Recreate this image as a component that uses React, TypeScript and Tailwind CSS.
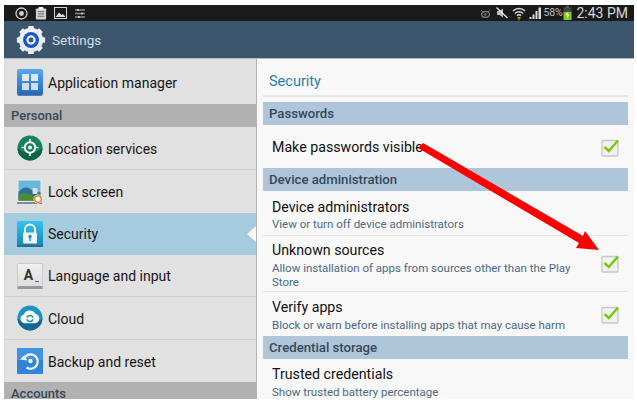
const font = 'font-["Roboto",sans-serif]'

function GearIcon() {
  const teeth = [0, 45, 90, 135, 180, 225, 270, 315]
  return (
    <svg width="30" height="30" viewBox="0 0 32 32">
      <defs>
        <radialGradient id="gearfill" cx="50%" cy="40%" r="60%">
          <stop offset="0%" stopColor="#ffffff" />
          <stop offset="100%" stopColor="#dfe4ea" />
        </radialGradient>
      </defs>
      {teeth.map((a) => (
        <rect key={a} x="13" y="1" width="6" height="6" rx="1" fill="#f2f4f6" transform={`rotate(${a} 16 16)`} />
      ))}
      <circle cx="16" cy="16" r="13" fill="url(#gearfill)" />
      <circle cx="16" cy="16" r="8.500" fill="#1a55cc" />
      <circle cx="16" cy="16" r="5" fill="#e6eef8" />
      <circle cx="16" cy="16" r="2.600" fill="#3d5a73" />
    </svg>
  )
}

function StatusLeft() {
  return (
    <div className="flex items-center gap-[7px] pl-[11px]">
      <svg width="13" height="13" viewBox="0 0 13 13">
        <circle cx="6.5" cy="6.5" r="5.5" fill="none" stroke="#cfcfcf" strokeWidth="1.3" />
        <circle cx="6.5" cy="6.5" r="2.4" fill="#cfcfcf" />
      </svg>
      <svg width="12" height="13" viewBox="0 0 12 14">
        <rect x="0.5" y="1.5" width="11" height="12" rx="1" fill="#d2d2d2" />
        <rect x="3.5" y="0" width="5" height="3" fill="#f0f0f0" />
        <path d="M2.5 5h7M2.5 7.5h7M2.5 10h7" stroke="#666" strokeWidth="1" />
      </svg>
      <svg width="13" height="12" viewBox="0 0 13 12">
        <rect x="0.5" y="0.5" width="12" height="11" fill="#1a1a1a" stroke="#d2d2d2" />
        <path d="M1.5 10 L5 5.5 L7.5 8 L9 7 L11.5 10 Z" fill="#e0e0e0" />
      </svg>
      <svg width="11" height="11" viewBox="0 0 11 11" className="ml-[1px]">
        <path d="M0 2h10M0 5.500h10M0 9h10" stroke="#8b8b8b" strokeWidth="1.500" />
        <path d="M3 1v2M7 4.500v2M4 8v2" stroke="#d0d0d0" strokeWidth="1.500" />
      </svg>
    </div>
  )
}

function StatusRight() {
  return (
    <div className="flex items-center pr-[6px]">
      <svg width="11" height="9" viewBox="0 0 11 9" className="mr-[5px]">
        <ellipse cx="5.500" cy="5.500" rx="4" ry="3" fill="none" stroke="#777" strokeWidth="1.300" />
        <circle cx="5.500" cy="5.500" r="1.200" fill="#777" />
        <path d="M1 1 L3 3 M10 1 L8 3" stroke="#777" />
      </svg>
      <svg width="12" height="12" viewBox="0 0 12 12" className="mr-[4px]">
        <path d="M1 4h2.500L7 1.500v9L3.500 8H1z" fill="#bdbdbd" />
        <path d="M0.500 0.500 L11.500 11" stroke="#e8e8e8" strokeWidth="1.300" />
      </svg>
      <svg width="14" height="15" viewBox="0 0 14 15" className="mr-[3px]">
        <path d="M1 5 A8.500 8.500 0 0 1 13 5" fill="none" stroke="#d5d5d5" strokeWidth="1.500" />
        <path d="M3 7.500 A5.500 5.500 0 0 1 11 7.500" fill="none" stroke="#d5d5d5" strokeWidth="1.500" />
        <path d="M5 9.800 A2.600 2.600 0 0 1 9 9.800" fill="none" stroke="#d5d5d5" strokeWidth="1.500" />
        <path d="M5.500 11h3v1.500h-3z" fill="#9bbf3a" />
        <path d="M6 12.500h2l-1 2.500z" fill="#c47a2a" />
      </svg>
      <svg width="13" height="12" viewBox="0 0 12 12" className="mr-[2px]">
        <path d="M0 12h2V10H0zM3 12h2V7.500H3zM6 12h2V4H6zM9 12h2.500V0.500H9z" fill="#d8d8d8" />
      </svg>
      <span className="text-[10.500px] leading-none text-[#bdbdbd] tracking-[-0.2px]">58%</span>
      <svg width="9" height="14" viewBox="0 0 9 14" className="ml-[1px]">
        <rect x="3" y="0" width="3" height="2" fill="#666" />
        <rect x="0.500" y="1.500" width="8" height="5" fill="#444" />
        <rect x="0.500" y="6" width="8" height="8" fill="#86c71f" />
        <path d="M5.500 5 L2.500 9 H4.500 L3.500 13 L6.500 8.500 H4.500 Z" fill="#f0f5e0" />
      </svg>
      <span className="ml-[4px] text-[14px] leading-none text-[#d6d6d6]">2:43 PM</span>
    </div>
  )
}

function AppIcon() {
  return (
    <div className="w-[26px] h-[26px] rounded-[2px] bg-gradient-to-b from-[#58a7ea] to-[#2268be] grid grid-cols-2 gap-[1.500px] p-[5px] shadow-[0_1px_0_#6e7f8c]">
      <div className="bg-[#e0e8ef]" />
      <div className="bg-[#e0e8ef]" />
      <div className="bg-[#d3dde6]" />
      <div className="bg-[#d3dde6]" />
    </div>
  )
}

function LocationIcon() {
  return (
    <svg width="26" height="26" viewBox="0 0 26 26">
      <circle cx="13" cy="13" r="12.500" fill="#15815e" />
      <path d="M0.500 13 A12.500 12.500 0 0 0 25.500 13 A14 9 0 0 1 0.500 13" fill="#0d6347" />
      <circle cx="13" cy="12.500" r="5.200" fill="none" stroke="#f2f7f4" strokeWidth="2" />
      <circle cx="13" cy="12.500" r="2" fill="#f2f7f4" />
      <path d="M13 4v3.500M13 17.500V21M4.500 12.500H8M18 12.500h3.500" stroke="#f2f7f4" strokeWidth="1.600" />
    </svg>
  )
}

function LockScreenIcon() {
  return (
    <svg width="26" height="26" viewBox="0 0 26 26">
      <rect x="0" y="0" width="25" height="25" fill="#e8e8e8" />
      <rect x="1.500" y="1.500" width="22" height="20" fill="#6cb6d8" />
      <path d="M1.500 13 Q8 6 13 10 T23.500 13 V21.500 H1.500Z" fill="#2f6f9a" />
      <path d="M1.500 16 Q10 12 17 17 L19 21.500 H1.500Z" fill="#4d8a34" />
      <rect x="0" y="23" width="25" height="2" fill="#8a8a8a" />
      <rect x="15.500" y="9" width="5" height="6" rx="1" fill="#d8dfe4" />
      <circle cx="21" cy="20" r="4.500" fill="#ffffff" />
      <circle cx="21" cy="20" r="3.300" fill="none" stroke="#e58a1f" strokeWidth="1.500" />
    </svg>
  )
}

function SecurityIcon() {
  return (
    <svg width="26" height="26" viewBox="0 0 26 26">
      <defs>
        <linearGradient id="secfill" x1="0" y1="0" x2="0" y2="1">
          <stop offset="0%" stopColor="#37c3ee" />
          <stop offset="100%" stopColor="#0f87c0" />
        </linearGradient>
      </defs>
      <rect x="0" y="0" width="26" height="25" rx="1.500" fill="url(#secfill)" />
      <rect x="0" y="24" width="26" height="2" fill="#2b6d8d" />
      <path d="M8 12V8.500a5 5 0 0 1 10 0V12" fill="none" stroke="#f5f8fa" strokeWidth="2" />
      <rect x="6" y="11.500" width="14" height="11" rx="1" fill="#f5f8fa" />
      <circle cx="13" cy="15.500" r="1.700" fill="#1c8fc5" />
      <rect x="12.300" y="16" width="1.400" height="4" fill="#1c8fc5" />
    </svg>
  )
}

function LanguageIcon() {
  return (
    <div className="relative w-[26px] h-[26px] rounded-[1px] bg-gradient-to-b from-[#f1f1f1] to-[#dddddd] border border-[#cbcbcb] border-b-[3px] border-b-[#999] flex items-center justify-center">
      <span className="text-[14px] font-bold leading-none text-[#333] pr-[3px]">A</span>
      <div className="absolute right-[3px] bottom-[4px] w-[4px] h-[1px] bg-[#666]" />
    </div>
  )
}

function CloudIcon() {
  return (
    <svg width="26" height="26" viewBox="0 0 26 26">
      <circle cx="13" cy="13" r="12.500" fill="#1c93c4" />
      <path d="M0.500 13 A12.500 12.500 0 0 0 25.500 13 A14 9 0 0 1 0.500 13" fill="#12688f" />
      <path d="M7.500 18.200 A4.500 4.500 0 0 1 6.800 9.400 A6.500 6.500 0 0 1 18.500 9 A4.700 4.700 0 0 1 18.500 18.200 Z" fill="#f5f9fb" />
      <circle cx="13" cy="13.500" r="3" fill="none" stroke="#1c93c4" strokeWidth="1.300" />
      <path d="M8.500 13.500h3M14.500 13.500h3" stroke="#f5f9fb" strokeWidth="1.500" />
    </svg>
  )
}

function BackupIcon() {
  return (
    <svg width="26" height="26" viewBox="0 0 26 26">
      <rect x="0" y="0" width="26" height="26" rx="1" fill="#2f84d8" />
      <rect x="0" y="0" width="26" height="12" fill="#3f93e2" />
      <path d="M6.800 11 A7.200 7.200 0 1 1 9.500 19.500" fill="none" stroke="#f4f7fa" strokeWidth="2.200" />
      <path d="M3 11.500 L7 7.500 L10.500 12.500 Z" fill="#f4f7fa" />
      <circle cx="13.500" cy="13" r="2.200" fill="#f4f7fa" />
    </svg>
  )
}

function SideRow({ icon, label, height, active, border = true, textPad = 'pt-[1px]' }: { icon: React.ReactNode; label: string; height: string; active?: boolean; border?: boolean; textPad?: string }) {
  return (
    <div className={`flex items-center pl-[13px] ${height} ${active ? 'bg-[#a7cbde]' : 'bg-[#e1e1e1]'} ${border ? 'border-b border-[#cfcfcf]' : ''}`}>
      <div className="w-[26px] h-[26px] shrink-0">{icon}</div>
      <span className={`block ml-[5px] ${textPad} text-[14px] leading-none text-[#161616]`}>{label}</span>
    </div>
  )
}

function SideHeader({ label, height }: { label: string; height: string }) {
  return (
    <div className={`${height} bg-[#b1b1b1] pl-[7px] flex items-center`}>
      <span className="block text-[13px] font-medium leading-none text-[#34495a]">{label}</span>
    </div>
  )
}

function Checkbox() {
  return (
    <svg width="19" height="19" viewBox="0 0 19 19">
      <rect x="1" y="2.500" width="16" height="15.500" rx="1" fill="#f1f1f1" stroke="#c6c6c6" strokeWidth="1.300" />
      <path d="M3.500 9 L7.800 13 L17 2.500" fill="none" stroke="#7dc80f" strokeWidth="2.600" />
    </svg>
  )
}

function SectionHeader({ label }: { label: string }) {
  return (
    <div className="h-[23px] bg-[#afc6da] pl-[6px] flex items-center">
      <span className="text-[13.200px] font-medium leading-none text-[#34495a]">{label}</span>
    </div>
  )
}

function PrefRow({ title, sub, height, checkTop, titleOffset, border = true }: { title: string; sub?: string; height: string; checkTop?: string; titleOffset: string; border?: boolean }) {
  return (
    <div className={`relative pl-[9px] ${height} ${border ? 'border-b border-[#e2e2e2]' : ''} ${titleOffset}`}>
      <div className="text-[14.200px] leading-[17px] text-[#111]">{title}</div>
      {sub && <div className="text-[11.500px] leading-[14px] mt-[1.500px] text-[#4d6a85] w-[312px]">{sub}</div>}
      {checkTop && (
        <div className={`absolute right-[8px] ${checkTop}`}>
          <Checkbox />
        </div>
      )}
    </div>
  )
}

export default function App() {
  return (
    <div className={`w-[637px] h-[404px] bg-white pt-[5px] pl-[4px] overflow-hidden ${font}`}>
      <div className="relative w-[630px] h-[394px] overflow-hidden flex flex-col">
        <div className="h-[16px] bg-[#1a1a1a] flex items-center justify-between shrink-0">
          <StatusLeft />
          <StatusRight />
        </div>
        <div className="h-[37px] bg-[#3c566d] flex items-center pl-[12px] shrink-0">
          <GearIcon />
          <span className="block ml-[6px] pt-[2px] text-[13.500px] leading-none text-[#d5dde4]">Settings</span>
        </div>
        <div className="flex flex-1 min-h-0 border-t border-[#b9b9b9] bg-[#dcdcdc]">
          <div className="w-[252px] shrink-0 pt-[1px] bg-[#e1e1e1]">
            <SideRow icon={<AppIcon />} label="Application manager" height="h-[44px]" border={false} />
            <SideHeader label="Personal" height="h-[23px]" />
            <SideRow icon={<LocationIcon />} label="Location services" height="h-[43px]" />
            <SideRow icon={<LockScreenIcon />} label="Lock screen" height="h-[43px]" border={false} />
            <div className="relative">
              <SideRow icon={<SecurityIcon />} label="Security" height="h-[42px]" active border={false} textPad="pt-0" />
              <div className="absolute right-0 top-[13px] w-0 h-0 border-y-[8px] border-y-transparent border-r-[9px] border-r-[#f8f8f8]" />
            </div>
            <SideRow icon={<LanguageIcon />} label="Language and input" height="h-[42px]" />
            <SideRow icon={<CloudIcon />} label="Cloud" height="h-[43px]" />
            <SideRow icon={<BackupIcon />} label="Backup and reset" height="h-[42px]" border={false} />
            <SideHeader label="Accounts" height="h-[23px]" />
          </div>
          <div className="w-[1px] bg-[#b4b4b4] shrink-0" />
          <div className="flex-1 bg-[#f8f8f8] pl-[6px] pr-[6px] overflow-hidden">
            <div className="h-[38px] flex items-end pb-[6px] border-b-2 border-[#e0e6ea] mb-[5px] pl-[6px]">
              <span className="text-[14.500px] leading-none text-[#2581ab]">Security</span>
            </div>
            <SectionHeader label="Passwords" />
            <PrefRow title="Make passwords visible" height="h-[43px]" titleOffset="pt-[14px]" checkTop="top-[13px]" border={false} />
            <SectionHeader label="Device administration" />
            <PrefRow title="Device administrators" sub="View or turn off device administrators" height="h-[45px]" titleOffset="pt-[7.500px]" />
            <PrefRow title="Unknown sources" sub="Allow installation of apps from sources other than the Play Store" height="h-[56px]" titleOffset="pt-[6px]" checkTop="top-[18px]" />
            <PrefRow title="Verify apps" sub="Block or warn before installing apps that may cause harm" height="h-[44px]" titleOffset="pt-[7px]" checkTop="top-[13px]" border={false} />
            <SectionHeader label="Credential storage" />
            <PrefRow title="Trusted credentials" sub="Show trusted battery percentage" height="h-[44px]" titleOffset="pt-[7px]" border={false} />
          </div>
        </div>
        <svg width="637" height="404" viewBox="0 0 637 404" className="absolute left-[-4px] top-[-5px] pointer-events-none">
          <path d="M418 148 L423 143 L583 236 L585 231 L599 250 L576 248 L579 243 Z" fill="#ff0000" />
        </svg>
      </div>
    </div>
  )
}
